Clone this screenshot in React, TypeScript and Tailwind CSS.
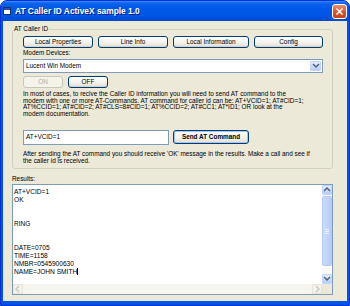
import React from "react";

function Btn({ className = "", children, disabled = false, bold = false }: { className?: string; children: React.ReactNode; disabled?: boolean; bold?: boolean }) {
  const base = disabled
    ? "border-[#C9C7BA] bg-[#F5F4EA] text-[#ACA899]"
    : "border-[#003C74] bg-linear-to-b from-[#FFFFFF] via-[#F4F3EE] to-[#E3E0D2] text-black shadow-[inset_0_-1px_0_#D6D0C5]";
  return (
    <div className={`flex items-center justify-center rounded-[3px] border leading-none ${base} ${bold ? "font-bold shadow-[inset_0_0_0_1px_#A9C3F0]" : ""} ${className}`}>
      {children}
    </div>
  );
}

function Chevron({ dir, color }: { dir: "up" | "down" | "left" | "right"; color: string }) {
  const pts: Record<string, string> = {
    up: "1,5 4,2 7,5",
    down: "1,2 4,5 7,2",
    left: "5,1 2,4 5,7",
    right: "3,1 6,4 3,7",
  };
  return (
    <svg width="8" height="8" viewBox="0 0 8 8">
      <polyline points={pts[dir]} fill="none" stroke={color} strokeWidth="1.5" />
    </svg>
  );
}

export default function App() {
  return (
    <div className="w-[350px] h-[306px] flex flex-col rounded-t-[7px] bg-[#0055E5] border border-[#0831D9] overflow-hidden font-['Liberation_Sans',Arial,sans-serif] text-[6.4px] text-black">
      {/* title bar */}
      <div className="h-[20px] shrink-0 flex items-center pl-[2px] pr-[2px] bg-[linear-gradient(180deg,#3D8FF8_0%,#0E63EE_10%,#0058E8_35%,#0055E2_75%,#0048CF_100%)]">
        <svg width="8" height="8" viewBox="0 0 8 8" className="shrink-0">
          <rect x="0.5" y="0.5" width="7" height="7" fill="#FFFFFF" stroke="#1B2E6B" />
          <rect x="1" y="1" width="6" height="2" fill="#2D4FA8" />
        </svg>
        <div className="ml-[4px] text-white font-bold text-[8.4px] leading-none [text-shadow:1px_1px_0_#0A1883]">
          AT Caller ID ActiveX sample 1.0
        </div>
        <div className="ml-auto w-[15px] h-[15px] rounded-[3px] border border-white bg-linear-to-b from-[#EB8E6E] via-[#D9572F] to-[#C6431C] flex items-center justify-center">
          <svg width="9" height="9" viewBox="0 0 9 9">
            <path d="M1.5 1.5 L7.5 7.5 M7.5 1.5 L1.5 7.5" stroke="#FFFFFF" strokeWidth="1.6" />
          </svg>
        </div>
      </div>

      {/* client area */}
      <div className="flex-1 mx-[2px] mb-[4px] bg-[#ECE9D8] pt-[8px] pl-[9px]">
        {/* group box */}
        <div className="relative w-[321px] h-[140px] border border-[#D0D0BF] rounded-[3px] pt-[6px] pl-[10px]">
          <div className="absolute left-0 top-[-5px] px-[1px] bg-[#ECE9D8] leading-[8px]">AT Caller ID</div>

          <div className="flex gap-[5px] h-[12px]">
            <Btn className="w-[70px]">Local Properties</Btn>
            <Btn className="w-[70px]">Line Info</Btn>
            <Btn className="w-[76px]">Local Information</Btn>
            <Btn className="w-[69px]">Config</Btn>
          </div>

          <div className="h-[10px] leading-[10px]">Modem Devices:</div>

          <div className="mt-[1px] w-[300px] h-[14px] border border-[#7F9DB9] bg-white flex items-center pl-[2px]">
            <span className="leading-none">Lucent Win Modem</span>
            <div className="ml-auto mr-[1px] w-[11px] h-[10px] rounded-[1px] border border-[#C3D3FD] bg-linear-to-b from-[#E6EEFF] to-[#B9CCF8] flex items-center justify-center">
              <Chevron dir="down" color="#4D6185" />
            </div>
          </div>

          <div className="mt-[3px] flex gap-[5px] h-[12px]">
            <Btn className="w-[40px]" disabled>ON</Btn>
            <Btn className="w-[40px]">OFF</Btn>
          </div>

          <div className="mt-[3px] leading-[6.7px] whitespace-nowrap">
            In most of cases, to recive the Caller ID information you will need to send AT command to the
            <br />
            modem with one or more AT-Commands. AT command for caller id can be: AT+VCID=1; AT#CID=1;
            <br />
            AT%CCID=1; AT#CID=2; AT#CLS=8#CID=1; AT%CCID=2; AT#CC1; AT*ID1; OR look at the
            <br />
            modem documentation.
          </div>

          <div className="mt-[12px] flex items-center gap-[4px]">
            <div className="w-[146px] h-[15px] border border-[#7F9DB9] bg-white flex items-center pl-[2px]">
              <span className="leading-none">AT+VCID=1</span>
            </div>
            <Btn className="w-[76px] h-[14px]" bold>Send AT Command</Btn>
          </div>

          <div className="mt-[6px] leading-[6.7px] whitespace-nowrap">
            After sending the AT command you should receive 'OK' message in the results. Make a call and see if
            <br />
            the caller id is received.
          </div>
        </div>

        <div className="mt-[5px] h-[10px] leading-[10px]">Results:</div>

        {/* results text area */}
        <div className="w-[321px] h-[111px] border border-[#7F9DB9] bg-white grid grid-cols-[1fr_10px] grid-rows-[1fr_10px]">
          <div className="pl-[1px] pt-[3px] leading-[8px] text-[6.6px] whitespace-pre overflow-hidden">
            {"AT+VCID=1\nOK\n\n\nRING\n\n\nDATE=0705\nTIME=1158\nNMBR=0545900630\nNAME=JOHN SMITH"}
            <span className="inline-block w-[1px] h-[7px] bg-black align-[-1px]" />
          </div>

          {/* vertical scrollbar */}
          <div className="flex flex-col bg-[#FAFAF6]">
            <div className="h-[10px] rounded-[1px] border border-[#C3D3FD] bg-linear-to-b from-[#E6EEFF] to-[#B9CCF8] flex items-center justify-center">
              <Chevron dir="up" color="#4D6185" />
            </div>
            <div className="mt-[1px] h-[70px] rounded-[2px] border border-[#B6C8F4] bg-linear-to-r from-[#CCDAFD] to-[#BACDF9] flex flex-col items-center justify-center gap-[1px]">
              <div className="w-[4px] h-[1px] bg-[#EEF3FF]" />
              <div className="w-[4px] h-[1px] bg-[#EEF3FF]" />
              <div className="w-[4px] h-[1px] bg-[#EEF3FF]" />
            </div>
            <div className="flex-1" />
            <div className="h-[10px] rounded-[1px] border border-[#C3D3FD] bg-linear-to-b from-[#E6EEFF] to-[#B9CCF8] flex items-center justify-center">
              <Chevron dir="down" color="#4D6185" />
            </div>
          </div>

          {/* horizontal scrollbar (disabled) */}
          <div className="flex bg-[#F6F5F0]">
            <div className="w-[10px] rounded-[1px] border border-[#E6E4DA] bg-[#F3F2EC] flex items-center justify-center">
              <Chevron dir="left" color="#CFCCBF" />
            </div>
            <div className="flex-1" />
            <div className="w-[10px] rounded-[1px] border border-[#E6E4DA] bg-[#F3F2EC] flex items-center justify-center">
              <Chevron dir="right" color="#CFCCBF" />
            </div>
          </div>
          <div className="bg-[#ECE9D8]" />
        </div>
      </div>
    </div>
  );
}
